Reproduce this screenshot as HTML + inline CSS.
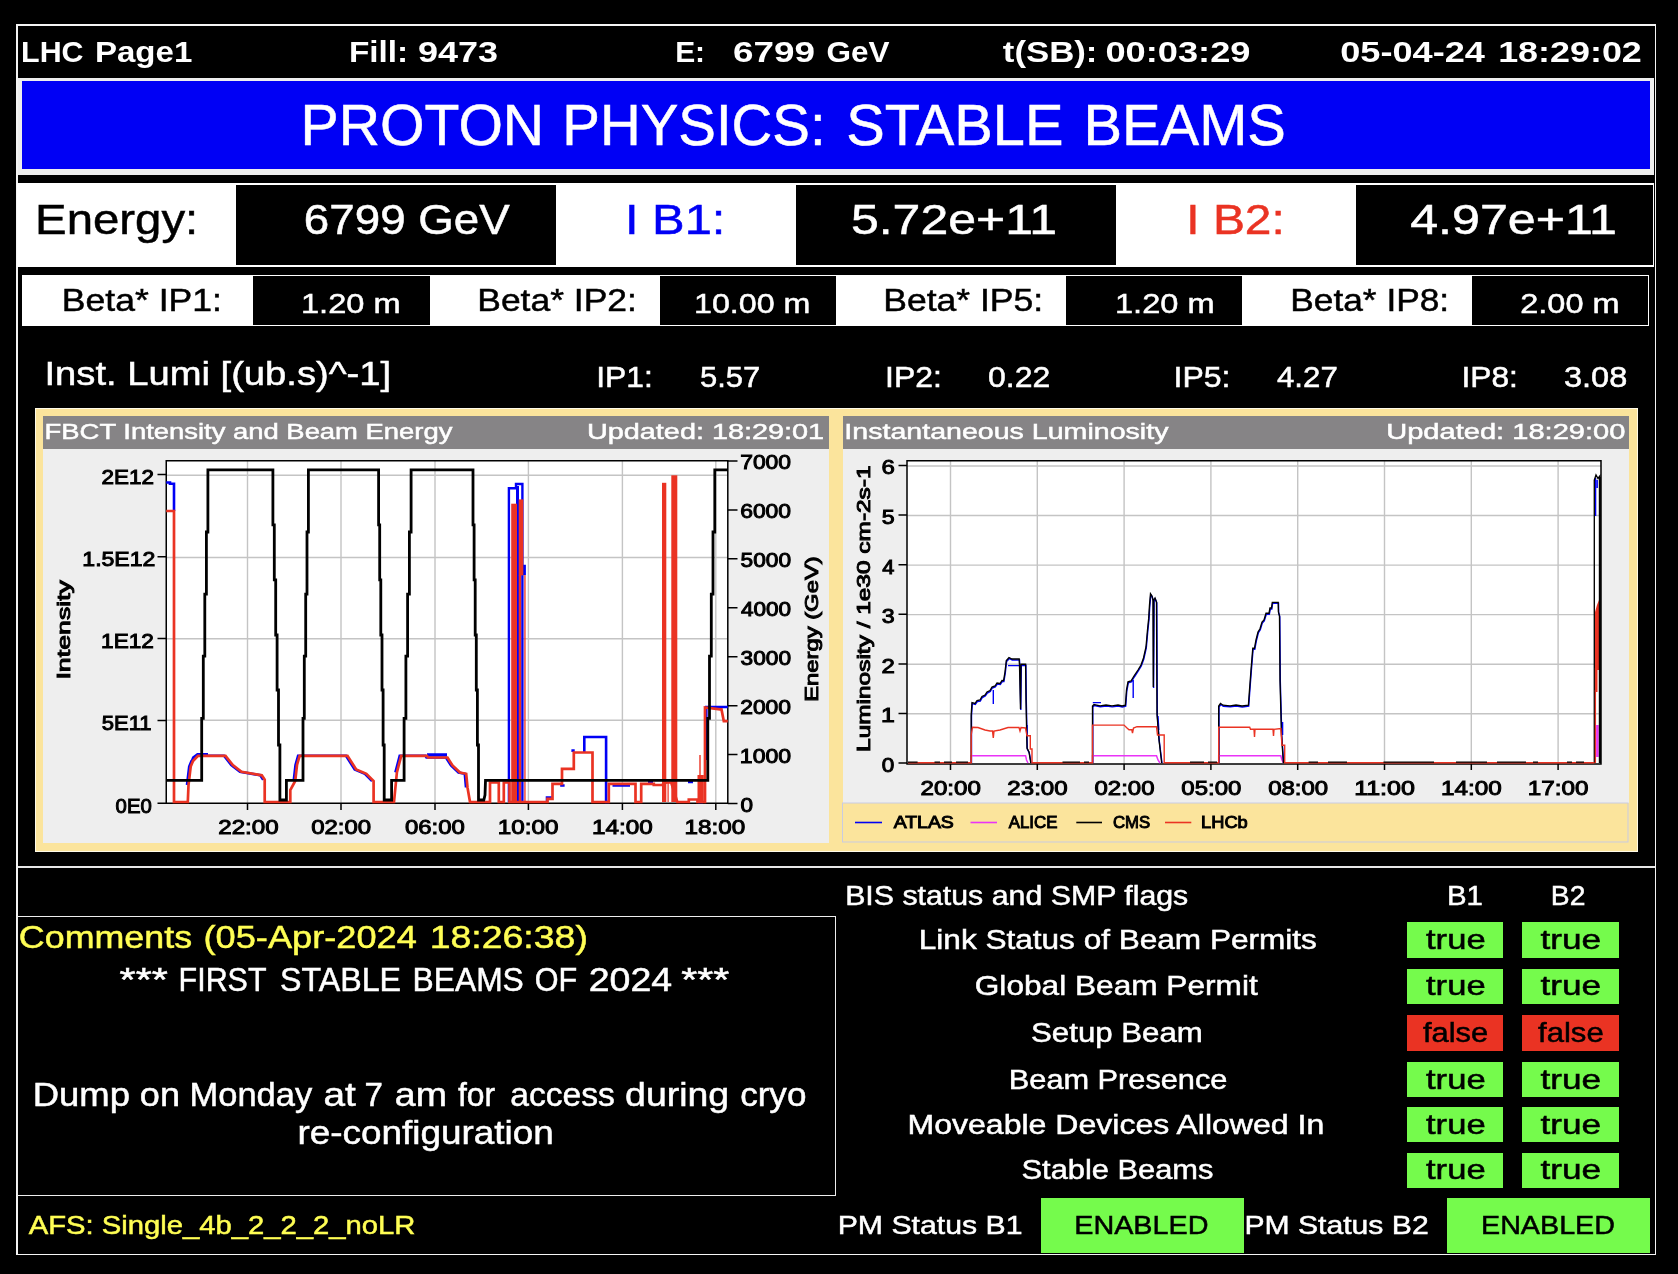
<!DOCTYPE html>
<html lang="en">
<head>
<meta charset="utf-8">
<title>LHC Page1</title>
<style>
html,body{margin:0;padding:0;background:#000;}
body{width:1678px;height:1274px;overflow:hidden;position:relative;font-family:"Liberation Sans",sans-serif;}
#page{position:absolute;left:0;top:0;width:1678px;height:1274px;background:#000;overflow:hidden;filter:blur(0.5px);}
#page div{position:absolute;box-sizing:content-box;}
svg text{white-space:pre;}
</style>
</head>
<body>
<div id="page">
<div class="frame" style="left:16px;top:24.2px;width:1636.5px;height:1228px;border-style:solid;border-color:#f4f4f4;border-width:2.4px 1.4px 1.4px 2.4px"></div>
<div class="banner-border" style="left:18px;top:77.6px;width:1635.50px;height:97.90px;background:#eeeeee;"></div>
<div class="banner" style="left:21.7px;top:80.5px;width:1628.30px;height:88.50px;background:#0000f5;"></div>
<div class="row-energy" style="left:16.5px;top:183.3px;width:1637.50px;height:83.30px;background:#fff;"></div>
<div class="val" style="left:236px;top:185.2px;width:319.50px;height:79.40px;background:#000;"></div>
<div class="val" style="left:796px;top:185.2px;width:319.50px;height:79.40px;background:#000;"></div>
<div class="val" style="left:1355.5px;top:185.2px;width:297.70px;height:79.40px;background:#000;"></div>
<div class="row-beta" style="left:21.7px;top:274.5px;width:1627.60px;height:51.50px;background:#fff;"></div>
<div class="val" style="left:253px;top:275.8px;width:176.50px;height:48.90px;background:#000;"></div>
<div class="val" style="left:660px;top:275.8px;width:176.00px;height:48.90px;background:#000;"></div>
<div class="val" style="left:1066px;top:275.8px;width:176.00px;height:48.90px;background:#000;"></div>
<div class="val" style="left:1472px;top:275.8px;width:176.20px;height:48.90px;background:#000;"></div>
<div class="charts" style="left:35.3px;top:408px;width:1600.60px;height:441.60px;background:#fbe49c;border:1px solid #fffbe8;"></div>
<div class="chart-panel" style="left:42.5px;top:415.5px;width:786.75px;height:427.00px;background:#eeeeee;"></div>
<div class="chart-head" style="left:42.5px;top:415.5px;width:786.75px;height:33.25px;background:#868486;"></div>
<div class="chart-panel" style="left:842.5px;top:415.5px;width:786.75px;height:387.30px;background:#eeeeee;"></div>
<div class="chart-head" style="left:842.5px;top:415.5px;width:786.75px;height:33.25px;background:#868486;"></div>
<div class="sep" style="left:18px;top:866.2px;width:1637.00px;height:1.70px;background:#e6e6e6;"></div>
<div class="comments" style="left:16.5px;top:916px;width:817.6px;height:277.8px;border:1.6px solid #ededed"></div>
<div class="flag" style="left:1407px;top:922px;width:96.25px;height:35.50px;background:#75fb4c;"></div>
<div class="flag" style="left:1522px;top:922px;width:96.50px;height:35.50px;background:#75fb4c;"></div>
<div class="flag" style="left:1407px;top:969px;width:96.25px;height:35.20px;background:#75fb4c;"></div>
<div class="flag" style="left:1522px;top:969px;width:96.50px;height:35.20px;background:#75fb4c;"></div>
<div class="flag" style="left:1407px;top:1015.25px;width:96.25px;height:35.25px;background:#ea3323;"></div>
<div class="flag" style="left:1522px;top:1015.25px;width:96.50px;height:35.25px;background:#ea3323;"></div>
<div class="flag" style="left:1407px;top:1061.75px;width:96.25px;height:35.00px;background:#75fb4c;"></div>
<div class="flag" style="left:1522px;top:1061.75px;width:96.50px;height:35.00px;background:#75fb4c;"></div>
<div class="flag" style="left:1407px;top:1106.5px;width:96.25px;height:35.00px;background:#75fb4c;"></div>
<div class="flag" style="left:1522px;top:1106.5px;width:96.50px;height:35.00px;background:#75fb4c;"></div>
<div class="flag" style="left:1407px;top:1152.75px;width:96.25px;height:35.25px;background:#75fb4c;"></div>
<div class="flag" style="left:1522px;top:1152.75px;width:96.50px;height:35.25px;background:#75fb4c;"></div>
<div class="flag" style="left:1040.75px;top:1197.75px;width:203.50px;height:54.85px;background:#75fb4c;"></div>
<div class="flag" style="left:1447px;top:1197.75px;width:203.25px;height:54.85px;background:#75fb4c;"></div>
<svg width="1678" height="1274" viewBox="0 0 1678 1274" font-family="'Liberation Sans', sans-serif" style="position:absolute;left:0;top:0">
<g id="chart-fbct"><rect x="166.25" y="460.75" width="561.55" height="342.50" fill="#fff"/>
<path d="M166.25 475.3 H727.8 M166.25 557.5 H727.8 M166.25 638.8 H727.8 M166.25 720.3 H727.8 M247.5 460.75 V803.25 M341 460.75 V803.25 M435 460.75 V803.25 M528.4 460.75 V803.25 M622.4 460.75 V803.25 M715.8 460.75 V803.25 " stroke="#c4c4c4" stroke-width="1.4" fill="none"/>
<path d="M166.25 460.75 H727.8 V803.25 H166.25 Z M157.5 474.5 H166.25 M157.5 556.75 H166.25 M157.5 638.5 H166.25 M157.5 720.5 H166.25 M157.5 803.25 H166.25 M727.8 461.00 H737.5 M727.8 509.93 H737.5 M727.8 558.86 H737.5 M727.8 607.79 H737.5 M727.8 656.72 H737.5 M727.8 705.65 H737.5 M727.8 754.58 H737.5 M727.8 803.51 H737.5 M247.5 803.25 V810 M341 803.25 V810 M435 803.25 V810 M528.4 803.25 V810 M622.4 803.25 V810 M715.8 803.25 V810 " stroke="#000" stroke-width="1.5" fill="none"/>
<path d="M187.0 785.0 L189.2 766.6 L191.5 761.0 L196.5 755.8 L224.0 755.8 L231.3 765.0 L240.0 771.8 L260.3 775.3 L263.2 779.7 M293.7 781.0 L295.5 765.0 L298.1 755.8 L346.0 755.8 L354.7 769.5 L364.9 773.8 L372.1 781.0 M395.4 772.4 L399.7 755.8 L425.5 755.8 L426.5 757.5 L446.0 757.5 L451.0 765.5 L458.5 772.5 L464.8 773.8 L466.0 787.5 M166.2 482.5 L170.0 482.5 L170.0 483.8 L174.0 483.8 L174.0 511.0 M547.0 802.0 L547.0 797.5 L552.0 797.5 M560.2 785.5 L564.6 785.5 M190.0 766.0 L193.2 757.5 L197.5 754.4 L208.0 754.4 M427.0 754.6 L447.0 754.6 M572.7 752.0 L572.7 750.6 L574.7 750.6 M584.3 752.9 L584.3 737.0 L606.1 737.0 L606.1 802.0 L609.0 802.0 M612.5 785.5 L630.0 785.5 M648.0 782.3 L653.0 782.3 M688.0 782.0 L693.0 782.0 M698.0 802.0 L703.0 802.0 M706.3 760.0 L706.3 707.0 L727.8 707.0" stroke="#0000f5" stroke-width="2.6" fill="none" stroke-linejoin="miter"/>
<path d="M508.9 802.0 V488.3 H516 V484 H522.4 V802.0 M524.7 564.7 V575" stroke="#0000f5" stroke-width="2.4" fill="none"/>
<rect x="516" y="486" width="3" height="316" fill="#0000f5"/>
<path d="M166.2 511.0 L174.0 511.0 L174.0 802.0 L187.8 802.0 L188.5 785.0 L190.7 766.6 L193.0 761.0 L198.0 755.8 L225.5 755.8 L232.8 765.0 L241.5 771.8 L261.8 775.3 L264.7 779.7 L264.7 802.0 L290.3 802.0 L290.3 790.0 L295.2 781.0 L297.0 765.0 L299.6 755.8 L347.5 755.8 L356.2 769.5 L366.4 773.8 L373.6 781.0 L373.6 802.0 L394.0 802.0 L396.9 772.4 L401.2 755.8 L427.0 755.8 L428.0 757.5 L447.5 757.5 L452.5 765.5 L460.0 772.5 L466.2 773.8 L467.5 787.5 L470.0 802.0 L490.0 802.0 L490.0 782.5 L498.8 782.5 L498.8 802.0 L503.8 802.0 L503.8 782.5 L509.5 782.5 L509.5 802.0 L511.2 802.0 L525.0 802.0 L547.5 802.0 L547.5 798.8 L552.5 798.8 L552.5 783.8 L562.0 783.8 L562.0 768.8 L573.8 768.8 L573.8 752.5 L592.5 752.5 L592.5 802.0 L608.8 802.0 L608.8 783.8 L635.5 783.8 L635.5 802.0 L641.2 802.0 L641.2 783.8 L653.8 783.8 L653.8 785.0 L662.0 785.0 L666.2 782.5 L671.2 782.5 L677.3 802.0 L688.8 802.0 L688.8 799.5 L697.5 799.5 L697.5 802.0 L705.0 802.0 L705.0 707.5 L720.0 709.4 L721.5 709.4 L723.8 721.2 L727.8 721.2" stroke="#ea3323" stroke-width="2.7" fill="none" stroke-linejoin="miter"/>
<g fill="#ea3323"><rect x="511.2" y="503.7" width="5.8" height="298.3"/><rect x="518.7" y="499.4" width="4.6" height="76"/><rect x="518.7" y="575" width="2.4" height="227"/><rect x="524.3" y="575" width="1.3" height="227"/><rect x="513.2" y="782" width="3" height="20"/><rect x="662" y="482.8" width="4.3" height="319.2"/><rect x="671.3" y="475.3" width="6" height="326.7"/><rect x="697.5" y="775" width="6.3" height="27"/><rect x="699.3" y="755" width="1.4" height="22"/><rect x="667.5" y="783" width="1.2" height="19"/></g>
<path d="M166.2 780.4 L201.7 780.4 L201.7 718.3 L203.3 718.3 L203.3 656.2 L204.8 656.2 L204.8 594.1 L206.4 594.1 L206.4 532.0 L207.9 532.0 L207.9 469.9 L209.5 469.9 L272.9 469.9 L272.9 524.9 L274.3 524.9 L274.3 579.9 L275.7 579.9 L275.7 635.0 L277.1 635.0 L277.1 690.0 L278.5 690.0 L278.5 745.0 L279.9 745.0 L279.9 800.0 L281.3 800.0 L286.4 800.0 L286.4 780.4 L303.0 780.4 L303.0 718.3 L304.3 718.3 L304.3 656.2 L305.7 656.2 L305.7 594.1 L307.0 594.1 L307.0 532.0 L308.4 532.0 L308.4 469.9 L309.7 469.9 L378.6 469.9 L378.6 524.9 L379.7 524.9 L379.7 579.9 L380.8 579.9 L380.8 635.0 L382.0 635.0 L382.0 690.0 L383.1 690.0 L383.1 745.0 L384.2 745.0 L384.2 800.0 L385.3 800.0 L391.6 800.0 L391.6 780.4 L404.1 780.4 L404.1 718.3 L405.9 718.3 L405.9 656.2 L407.6 656.2 L407.6 594.1 L409.4 594.1 L409.4 532.0 L411.1 532.0 L411.1 469.9 L412.9 469.9 L473.0 469.9 L473.0 524.9 L474.1 524.9 L474.1 579.9 L475.2 579.9 L475.2 635.0 L476.3 635.0 L476.3 690.0 L477.4 690.0 L477.4 745.0 L478.5 745.0 L478.5 800.0 L479.6 800.0 L483.8 800.0 L485.0 795.0 L485.5 780.4 L707.8 780.4 L707.8 718.3 L709.5 718.3 L709.5 656.2 L711.3 656.2 L711.3 594.1 L713.0 594.1 L713.0 532.0 L714.8 532.0 L714.8 469.9 L716.5 469.9 L727.8 469.9" stroke="#000" stroke-width="2.8" fill="none" stroke-linejoin="miter"/>
<text transform="translate(101.45 483.85) scale(1.1363 1)" font-size="19.77" stroke="#000" stroke-width="0.95" fill="#000">2E12</text>
<text transform="translate(82.31 566.10) scale(1.1671 1)" font-size="19.77" stroke="#000" stroke-width="0.95" fill="#000">1.5E12</text>
<text transform="translate(101.09 647.85) scale(1.1443 1)" font-size="19.77" stroke="#000" stroke-width="0.95" fill="#000">1E12</text>
<text transform="translate(101.81 729.85) scale(1.1148 1)" font-size="19.77" stroke="#000" stroke-width="0.95" fill="#000">5E11</text>
<text transform="translate(115.62 812.60) scale(1.0275 1)" font-size="19.77" stroke="#000" stroke-width="0.95" fill="#000">0E0</text>
<text transform="translate(740.18 469.45) scale(1.1572 1)" font-size="19.77" stroke="#000" stroke-width="0.95" fill="#000">7000</text>
<text transform="translate(740.18 518.38) scale(1.1572 1)" font-size="19.77" stroke="#000" stroke-width="0.95" fill="#000">6000</text>
<text transform="translate(740.54 567.31) scale(1.1489 1)" font-size="19.77" stroke="#000" stroke-width="0.95" fill="#000">5000</text>
<text transform="translate(740.90 616.24) scale(1.1407 1)" font-size="19.77" stroke="#000" stroke-width="0.95" fill="#000">4000</text>
<text transform="translate(740.54 665.17) scale(1.1489 1)" font-size="19.77" stroke="#000" stroke-width="0.95" fill="#000">3000</text>
<text transform="translate(740.18 714.10) scale(1.1572 1)" font-size="19.77" stroke="#000" stroke-width="0.95" fill="#000">2000</text>
<text transform="translate(739.81 763.03) scale(1.1657 1)" font-size="19.77" stroke="#000" stroke-width="0.95" fill="#000">1000</text>
<text transform="translate(740.55 811.96) scale(1.1382 1)" font-size="19.77" stroke="#000" stroke-width="0.95" fill="#000">0</text>
<text transform="translate(218.32 834.45) scale(1.2195 1)" font-size="19.77" stroke="#000" stroke-width="0.95" fill="#000">22:00</text>
<text transform="translate(311.20 834.45) scale(1.2117 1)" font-size="19.77" stroke="#000" stroke-width="0.95" fill="#000">02:00</text>
<text transform="translate(404.95 834.45) scale(1.2117 1)" font-size="19.77" stroke="#000" stroke-width="0.95" fill="#000">06:00</text>
<text transform="translate(497.68 834.45) scale(1.2274 1)" font-size="19.77" stroke="#000" stroke-width="0.95" fill="#000">10:00</text>
<text transform="translate(592.08 834.45) scale(1.2274 1)" font-size="19.77" stroke="#000" stroke-width="0.95" fill="#000">14:00</text>
<text transform="translate(684.58 834.45) scale(1.2274 1)" font-size="19.77" stroke="#000" stroke-width="0.95" fill="#000">18:00</text>
<text transform="translate(69.50 679.59) rotate(-90) scale(1.4464 1)" font-size="18.49" stroke="#000" stroke-width="0.95" fill="#000">Intensity</text>
<text transform="translate(817.50 701.86) rotate(-90) scale(1.2881 1)" font-size="18.49" stroke="#000" stroke-width="0.95" fill="#000">Energy (GeV)</text></g>
<g id="chart-lumi"><rect x="907.0" y="460.75" width="694.00" height="303.15" fill="#fff"/>
<path d="M907.0 466.00 H1601.0 M907.0 515.55 H1601.0 M907.0 565.10 H1601.0 M907.0 614.65 H1601.0 M907.0 664.20 H1601.0 M907.0 713.75 H1601.0 M950.50 460.75 V763.9 M1037.30 460.75 V763.9 M1124.10 460.75 V763.9 M1210.90 460.75 V763.9 M1297.70 460.75 V763.9 M1384.50 460.75 V763.9 M1471.30 460.75 V763.9 M1558.10 460.75 V763.9 " stroke="#c4c4c4" stroke-width="1.4" fill="none"/>
<path d="M907.0 460.75 H1601.0 V763.9 H907.0 Z M898.5 465.50 H907.0 M898.5 515.10 H907.0 M898.5 564.70 H907.0 M898.5 614.30 H907.0 M898.5 663.90 H907.0 M898.5 713.50 H907.0 M898.5 763.10 H907.0 M950.50 763.9 V770 M1037.30 763.9 V770 M1124.10 763.9 V770 M1210.90 763.9 V770 M1297.70 763.9 V770 M1384.50 763.9 V770 M1471.30 763.9 V770 M1558.10 763.9 V770 " stroke="#000" stroke-width="1.5" fill="none"/>
<path d="M971.5 763.0 L971.5 716.0 L972.3 703.6 L975.3 704.5 L977.3 701.5 L980.3 701.0 L982.3 697.5 L985.3 696.0 L987.3 693.0 L990.3 691.5 L992.3 688.0 L995.3 687.0 L997.3 684.0 L1000.3 684.5 L1002.3 681.5 L1003.9 681.6 L1005.3 673.0 L1006.6 661.5 L1007.8 660.3 L1009.3 658.5 L1012.3 660.0 L1019.5 660.0 L1019.8 666.0 L1020.8 710.0 L1021.3 665.2 L1025.9 665.2 L1026.3 701.0 L1027.3 749.0 L1029.3 753.0 L1031.1 763.0 M1092.8 763.0 L1092.8 707.0 L1094.3 705.5 L1100.3 706.8 L1106.3 706.0 L1112.3 706.9 L1118.3 706.0 L1122.3 707.0 L1125.7 706.2 L1126.8 691.0 L1128.3 682.9 L1131.3 682.0 L1134.3 677.0 L1138.3 671.0 L1141.3 666.0 L1143.8 659.0 L1146.3 648.0 L1147.8 631.0 L1149.0 619.4 L1149.8 606.0 L1150.8 594.8 L1152.3 597.0 L1153.3 601.0 L1153.6 688.0 L1154.1 601.0 L1155.3 599.0 L1156.8 603.0 L1157.3 715.0 L1159.3 741.0 L1162.0 763.0 M1219.0 763.0 L1219.0 707.0 L1220.8 704.5 L1223.3 706.2 L1230.3 706.8 L1236.3 706.0 L1242.3 707.0 L1248.7 706.2 L1249.8 691.0 L1251.3 671.2 L1253.1 649.2 L1254.8 649.2 L1256.3 641.0 L1258.3 633.0 L1260.3 629.8 L1262.3 623.0 L1264.3 621.0 L1266.3 614.2 L1269.3 614.2 L1270.3 609.0 L1271.8 609.0 L1272.6 603.3 L1278.5 603.3 L1278.7 613.0 L1279.8 616.8 L1280.3 681.0 L1281.1 710.0 L1281.8 736.0 L1283.7 763.0 M993.3 690.0 L993.3 704.0 M1008.0 665.6 L1025.0 665.6 M1133.2 680.0 L1133.2 698.0 M1092.8 702.6 L1101.0 702.6 M1595.6 478.0 L1595.6 516.0 M1597.2 480.0 L1597.2 488.0 M1027.2 725.0 L1027.2 735.0 M1158.0 716.0 L1158.8 730.0 M1282.6 722.0 L1282.6 735.0" stroke="#0000f5" stroke-width="1.4" fill="none"/>
<path d="M971.2 763.0 L971.2 755.7 L1025.6 755.7 L1026.5 760.0 L1028.0 763.0 M1092.5 763.0 L1092.5 755.7 L1156.5 755.7 L1158.0 760.0 L1160.0 763.0 M1218.7 763.0 L1218.7 755.7 L1280.8 755.7 L1282.0 760.0 L1283.4 763.0" stroke="#ea33f7" stroke-width="1.5" fill="none"/>
<path d="M971.2 763.0 L971.2 715.0 L972.0 702.6 L975.0 703.5 L977.0 700.5 L980.0 700.0 L982.0 696.5 L985.0 695.0 L987.0 692.0 L990.0 690.5 L992.0 687.0 L995.0 686.0 L997.0 683.0 L1000.0 683.5 L1002.0 680.5 L1003.6 680.6 L1005.0 672.0 L1006.3 660.5 L1007.5 659.3 L1009.0 657.5 L1012.0 659.0 L1019.2 659.0 L1019.5 665.0 L1020.5 709.0 L1021.0 664.2 L1025.6 664.2 L1026.0 700.0 L1027.0 748.0 L1029.0 752.0 L1030.8 763.0 M1092.5 763.0 L1092.5 706.0 L1094.0 704.5 L1100.0 705.8 L1106.0 705.0 L1112.0 705.9 L1118.0 705.0 L1122.0 706.0 L1125.4 705.2 L1126.5 690.0 L1128.0 681.9 L1131.0 681.0 L1134.0 676.0 L1138.0 670.0 L1141.0 665.0 L1143.5 658.0 L1146.0 647.0 L1147.5 630.0 L1148.7 618.4 L1149.5 605.0 L1150.5 593.8 L1152.0 596.0 L1153.0 600.0 L1153.3 687.0 L1153.8 600.0 L1155.0 598.0 L1156.5 602.0 L1157.0 714.0 L1159.0 740.0 L1161.7 763.0 M1218.7 763.0 L1218.7 706.0 L1220.5 703.5 L1223.0 705.2 L1230.0 705.8 L1236.0 705.0 L1242.0 706.0 L1248.4 705.2 L1249.5 690.0 L1251.0 670.2 L1252.8 648.2 L1254.5 648.2 L1256.0 640.0 L1258.0 632.0 L1260.0 628.8 L1262.0 622.0 L1264.0 620.0 L1266.0 613.2 L1269.0 613.2 L1270.0 608.0 L1271.5 608.0 L1272.3 602.3 L1278.2 602.3 L1278.4 612.0 L1279.5 615.8 L1280.0 680.0 L1280.8 709.0 L1281.5 735.0 L1283.4 763.0 M1594.3 763.0 L1594.3 480.0 L1596.0 475.0 L1598.0 478.5 L1599.8 476.0 L1600.2 763.0" stroke="#000" stroke-width="1.35" fill="none"/>
<path d="M908.0 762.8 L971.2 762.8 L971.2 735.0 L972.5 727.2 L978.0 727.5 L985.0 730.0 L990.0 731.0 L992.5 731.0 L993.3 738.0 L994.0 731.0 L1000.0 730.0 L1008.0 727.5 L1019.0 727.5 L1020.0 731.0 L1021.0 727.5 L1025.5 728.0 L1027.0 735.8 L1030.3 735.8 L1030.3 749.0 L1032.0 749.0 L1032.0 762.8 L1092.5 762.8 L1092.5 725.1 L1124.0 725.1 L1127.0 728.0 L1129.0 729.8 L1131.8 729.8 L1132.5 733.0 L1133.5 728.0 L1137.0 726.7 L1156.5 726.7 L1157.5 735.0 L1164.2 735.0 L1164.2 762.8 L1218.7 762.8 L1218.7 727.2 L1249.7 727.2 L1250.5 729.3 L1254.0 729.3 L1254.5 737.0 L1255.0 729.3 L1273.0 729.3 L1273.5 736.0 L1274.0 729.3 L1280.8 728.5 L1282.0 745.3 L1284.7 745.3 L1284.7 762.8 L1594.5 762.8" stroke="#ea3323" stroke-width="1.4" fill="none"/>
<path d="M1595.4 763.0 V690" stroke="#ea3323" stroke-width="1.3" fill="none"/>
<path d="M1596.2 692 V668" stroke="#ea3323" stroke-width="2.6" fill="none"/>
<path d="M1595 670 V612 L1597 605 L1599 600 V670 Z" fill="#ea3323" stroke="none"/>
<path d="M1597.4 725 V757" stroke="#ea33f7" stroke-width="2.6" fill="none"/>
<path d="M1599.8 477 V763.0" stroke="#000" stroke-width="2" fill="none"/>
<path d="M908 762.2 H917.6 M934.5 762.2 H940 M944 762.2 H952 M956 762.2 H968 M1062.5 762.2 H1080 M1084 762.2 H1089 M1190 762.2 H1204 M1208 762.2 H1217 M1308.6 762.2 H1318 M1328 762.2 H1347 M1383.5 762.2 H1434 M1456 762.2 H1487 M1497 762.2 H1526 M1533 762.2 H1538 M1567 762.2 H1572 M1576 762.2 H1584 " stroke="#000" stroke-width="1.3" fill="none"/>
<rect x="842.5" y="803" width="785.5" height="39" fill="#fbe49c" stroke="#c9cbe0" stroke-width="1"/><path d="M855 822.5 H882" stroke="#0000f5" stroke-width="1.6"/><path d="M970.5 822.5 H997" stroke="#ea33f7" stroke-width="1.6"/><path d="M1076.3 822.5 H1102" stroke="#000" stroke-width="1.6"/><path d="M1165 822.5 H1191.3" stroke="#ea3323" stroke-width="1.6"/>
<text transform="translate(881.38 474.45) scale(1.2140 1)" font-size="19.77" stroke="#000" stroke-width="0.95" fill="#000">6</text>
<text transform="translate(881.77 524.05) scale(1.1749 1)" font-size="19.77" stroke="#000" stroke-width="0.95" fill="#000">5</text>
<text transform="translate(882.16 573.65) scale(1.1037 1)" font-size="19.77" stroke="#000" stroke-width="0.95" fill="#000">4</text>
<text transform="translate(881.77 623.25) scale(1.1749 1)" font-size="19.77" stroke="#000" stroke-width="0.95" fill="#000">3</text>
<text transform="translate(881.38 672.85) scale(1.2140 1)" font-size="19.77" stroke="#000" stroke-width="0.95" fill="#000">2</text>
<text transform="translate(880.95 722.45) scale(1.2559 1)" font-size="19.77" stroke="#000" stroke-width="0.95" fill="#000">1</text>
<text transform="translate(881.80 772.05) scale(1.1382 1)" font-size="19.77" stroke="#000" stroke-width="0.95" fill="#000">0</text>
<text transform="translate(920.57 794.75) scale(1.2195 1)" font-size="19.77" stroke="#000" stroke-width="0.95" fill="#000">20:00</text>
<text transform="translate(1007.37 794.75) scale(1.2195 1)" font-size="19.77" stroke="#000" stroke-width="0.95" fill="#000">23:00</text>
<text transform="translate(1094.55 794.75) scale(1.2117 1)" font-size="19.77" stroke="#000" stroke-width="0.95" fill="#000">02:00</text>
<text transform="translate(1181.35 794.75) scale(1.2117 1)" font-size="19.77" stroke="#000" stroke-width="0.95" fill="#000">05:00</text>
<text transform="translate(1268.15 794.75) scale(1.2117 1)" font-size="19.77" stroke="#000" stroke-width="0.95" fill="#000">08:00</text>
<text transform="translate(1354.14 794.75) scale(1.2663 1)" font-size="19.77" stroke="#000" stroke-width="0.95" fill="#000">11:00</text>
<text transform="translate(1440.98 794.75) scale(1.2274 1)" font-size="19.77" stroke="#000" stroke-width="0.95" fill="#000">14:00</text>
<text transform="translate(1527.78 794.75) scale(1.2274 1)" font-size="19.77" stroke="#000" stroke-width="0.95" fill="#000">17:00</text>
<text transform="translate(893.75 828.30) scale(1.1668 1)" font-size="16.64" stroke="#000" stroke-width="0.95" fill="#000">ATLAS</text>
<text transform="translate(1008.75 828.30) scale(1.0128 1)" font-size="16.64" stroke="#000" stroke-width="0.95" fill="#000">ALICE</text>
<text transform="translate(1112.96 828.30) scale(1.0071 1)" font-size="16.64" stroke="#000" stroke-width="0.95" fill="#000">CMS</text>
<text transform="translate(1201.07 828.30) scale(1.0969 1)" font-size="16.64" stroke="#000" stroke-width="0.95" fill="#000">LHCb</text>
<text transform="translate(869.50 751.91) rotate(-90) scale(1.3221 1)" font-size="18.49" stroke="#000" stroke-width="0.95" fill="#000">Luminosity / 1e30 cm-2s-1</text></g>
<g id="txt-header"><text transform="translate(21.10 61.50) scale(1.0582 1)" font-size="28.73" font-weight="bold" fill="#fff">LHC</text>
<text transform="translate(94.93 61.50) scale(1.1506 1)" font-size="28.73" font-weight="bold" fill="#fff">Page1</text>
<text transform="translate(348.92 61.50) scale(1.1604 1)" font-size="28.73" font-weight="bold" fill="#fff">Fill:</text>
<text transform="translate(417.88 61.50) scale(1.2521 1)" font-size="28.73" font-weight="bold" fill="#fff">9473</text>
<text transform="translate(675.13 61.50) scale(1.0428 1)" font-size="28.73" font-weight="bold" fill="#fff">E:</text>
<text transform="translate(733.05 61.50) scale(1.2810 1)" font-size="28.73" font-weight="bold" fill="#fff">6799</text>
<text transform="translate(826.62 61.50) scale(1.0965 1)" font-size="28.73" font-weight="bold" fill="#fff">GeV</text>
<text transform="translate(1002.80 61.50) scale(1.2112 1)" font-size="28.73" font-weight="bold" fill="#fff">t(SB):</text>
<text transform="translate(1105.47 61.50) scale(1.2612 1)" font-size="28.73" font-weight="bold" fill="#fff">00:03:29</text>
<text transform="translate(1340.27 61.50) scale(1.2583 1)" font-size="28.73" font-weight="bold" fill="#fff">05-04-24</text>
<text transform="translate(1498.16 61.50) scale(1.2499 1)" font-size="28.73" font-weight="bold" fill="#fff">18:29:02</text></g>
<g id="txt-title"><text transform="translate(300.53 144.50) scale(0.9869 1)" font-size="57.96" stroke="#fff" stroke-width="0.5" fill="#fff">PROTON</text>
<text transform="translate(562.29 144.50) scale(0.9733 1)" font-size="57.96" stroke="#fff" stroke-width="0.5" fill="#fff">PHYSICS:</text>
<text transform="translate(846.19 144.50) scale(0.9967 1)" font-size="57.96" stroke="#fff" stroke-width="0.5" fill="#fff">STABLE</text>
<text transform="translate(1083.48 144.50) scale(0.9978 1)" font-size="57.96" stroke="#fff" stroke-width="0.5" fill="#fff">BEAMS</text></g>
<g id="txt-energy"><text transform="translate(35.10 234.30) scale(1.1209 1)" font-size="42.24" stroke="#000" stroke-width="0.5" fill="#000">Energy:</text>
<text transform="translate(303.86 234.30) scale(1.0973 1)" font-size="41.67" stroke="#fff" stroke-width="0.5" fill="#fff">6799 GeV</text>
<text transform="translate(624.93 234.30) scale(1.1724 1)" font-size="41.67" stroke="#0000f5" stroke-width="0.5" fill="#0000f5">I B1:</text>
<text transform="translate(850.94 234.30) scale(1.1991 1)" font-size="41.67" stroke="#fff" stroke-width="0.5" fill="#fff">5.72e+11</text>
<text transform="translate(1186.26 234.30) scale(1.1502 1)" font-size="41.67" stroke="#ea3323" stroke-width="0.5" fill="#ea3323">I B2:</text>
<text transform="translate(1410.22 234.30) scale(1.2033 1)" font-size="41.67" stroke="#fff" stroke-width="0.5" fill="#fff">4.97e+11</text></g>
<g id="txt-beta"><text transform="translate(61.82 310.80) scale(1.1064 1)" font-size="32.14" stroke="#000" stroke-width="0.5" fill="#000">Beta* IP1:</text>
<text transform="translate(477.23 310.80) scale(1.1036 1)" font-size="32.14" stroke="#000" stroke-width="0.5" fill="#000">Beta* IP2:</text>
<text transform="translate(883.22 310.80) scale(1.1054 1)" font-size="32.14" stroke="#000" stroke-width="0.5" fill="#000">Beta* IP5:</text>
<text transform="translate(1290.24 310.80) scale(1.0982 1)" font-size="32.14" stroke="#000" stroke-width="0.5" fill="#000">Beta* IP8:</text>
<text transform="translate(300.96 312.50) scale(1.1468 1)" font-size="28.44" stroke="#fff" stroke-width="0.5" fill="#fff">1.20 m</text>
<text transform="translate(693.99 312.50) scale(1.1328 1)" font-size="28.44" stroke="#fff" stroke-width="0.5" fill="#fff">10.00 m</text>
<text transform="translate(1114.96 312.50) scale(1.1468 1)" font-size="28.44" stroke="#fff" stroke-width="0.5" fill="#fff">1.20 m</text>
<text transform="translate(1520.22 312.50) scale(1.1438 1)" font-size="28.44" stroke="#fff" stroke-width="0.5" fill="#fff">2.00 m</text></g>
<g id="txt-lumi"><text transform="translate(44.52 385.00) scale(1.1302 1)" font-size="33.78" stroke="#fff" stroke-width="0.5" fill="#fff">Inst. Lumi [(ub.s)^-1]</text>
<text transform="translate(596.26 386.50) scale(1.0916 1)" font-size="29.16" stroke="#fff" stroke-width="0.5" fill="#fff">IP1:</text>
<text transform="translate(700.03 386.50) scale(1.0613 1)" font-size="29.16" stroke="#fff" stroke-width="0.5" fill="#fff">5.57</text>
<text transform="translate(885.00 386.50) scale(1.0969 1)" font-size="29.16" stroke="#fff" stroke-width="0.5" fill="#fff">IP2:</text>
<text transform="translate(988.00 386.50) scale(1.0978 1)" font-size="29.16" stroke="#fff" stroke-width="0.5" fill="#fff">0.22</text>
<text transform="translate(1173.50 386.50) scale(1.0969 1)" font-size="29.16" stroke="#fff" stroke-width="0.5" fill="#fff">IP5:</text>
<text transform="translate(1277.01 386.50) scale(1.0706 1)" font-size="29.16" stroke="#fff" stroke-width="0.5" fill="#fff">4.27</text>
<text transform="translate(1461.53 386.50) scale(1.0862 1)" font-size="29.16" stroke="#fff" stroke-width="0.5" fill="#fff">IP8:</text>
<text transform="translate(1563.98 386.50) scale(1.1161 1)" font-size="29.16" stroke="#fff" stroke-width="0.5" fill="#fff">3.08</text></g>
<g id="txt-charthdr"><text transform="translate(44.56 439.20) scale(1.2359 1)" font-size="22.19" stroke="#fff" stroke-width="0.5" fill="#fff">FBCT Intensity and Beam Energy</text>
<text transform="translate(586.95 439.20) scale(1.2993 1)" font-size="22.19" stroke="#fff" stroke-width="0.5" fill="#fff">Updated: 18:29:01</text>
<text transform="translate(844.37 439.20) scale(1.2883 1)" font-size="22.19" stroke="#fff" stroke-width="0.5" fill="#fff">Instantaneous Luminosity</text>
<text transform="translate(1386.18 439.20) scale(1.3107 1)" font-size="22.19" stroke="#fff" stroke-width="0.5" fill="#fff">Updated: 18:29:00</text></g>
<g id="txt-comments"><text transform="translate(18.82 947.50) scale(1.1202 1)" font-size="32.00" stroke="#fffe54" stroke-width="0.5" fill="#fffe54">Comments</text>
<text transform="translate(203.55 947.50) scale(1.1315 1)" font-size="32.00" stroke="#fffe54" stroke-width="0.5" fill="#fffe54">(05-Apr-2024</text>
<text transform="translate(429.66 947.50) scale(1.1705 1)" font-size="32.00" stroke="#fffe54" stroke-width="0.5" fill="#fffe54">18:26:38)</text>
<text transform="translate(119.60 990.50) scale(1.2629 1)" font-size="32.71" stroke="#fff" stroke-width="0.5" fill="#fff">***</text>
<text transform="translate(178.62 990.50) scale(0.9302 1)" font-size="32.71" stroke="#fff" stroke-width="0.5" fill="#fff">FIRST</text>
<text transform="translate(279.99 990.50) scale(0.9845 1)" font-size="32.71" stroke="#fff" stroke-width="0.5" fill="#fff">STABLE</text>
<text transform="translate(412.52 990.50) scale(0.9720 1)" font-size="32.71" stroke="#fff" stroke-width="0.5" fill="#fff">BEAMS</text>
<text transform="translate(534.82 990.50) scale(0.9341 1)" font-size="32.71" stroke="#fff" stroke-width="0.5" fill="#fff">OF</text>
<text transform="translate(588.74 990.50) scale(1.1467 1)" font-size="32.71" stroke="#fff" stroke-width="0.5" fill="#fff">2024</text>
<text transform="translate(681.36 990.50) scale(1.2562 1)" font-size="32.71" stroke="#fff" stroke-width="0.5" fill="#fff">***</text>
<text transform="translate(32.65 1106.00) scale(1.1154 1)" font-size="32.71" stroke="#fff" stroke-width="0.5" fill="#fff">Dump</text>
<text transform="translate(139.87 1106.00) scale(1.1036 1)" font-size="32.71" stroke="#fff" stroke-width="0.5" fill="#fff">on</text>
<text transform="translate(189.56 1106.00) scale(1.0543 1)" font-size="32.71" stroke="#fff" stroke-width="0.5" fill="#fff">Monday</text>
<text transform="translate(323.54 1106.00) scale(1.1851 1)" font-size="32.71" stroke="#fff" stroke-width="0.5" fill="#fff">at</text>
<text transform="translate(364.45 1106.00) scale(1.0109 1)" font-size="32.71" stroke="#fff" stroke-width="0.5" fill="#fff">7</text>
<text transform="translate(394.83 1106.00) scale(1.1469 1)" font-size="32.71" stroke="#fff" stroke-width="0.5" fill="#fff">am</text>
<text transform="translate(458.00 1106.00) scale(0.9733 1)" font-size="32.71" stroke="#fff" stroke-width="0.5" fill="#fff">for</text>
<text transform="translate(510.20 1106.00) scale(1.0274 1)" font-size="32.71" stroke="#fff" stroke-width="0.5" fill="#fff">access</text>
<text transform="translate(625.08 1106.00) scale(1.1440 1)" font-size="32.71" stroke="#fff" stroke-width="0.5" fill="#fff">during</text>
<text transform="translate(740.15 1106.00) scale(1.0724 1)" font-size="32.71" stroke="#fff" stroke-width="0.5" fill="#fff">cryo</text>
<text transform="translate(297.44 1144.00) scale(1.1280 1)" font-size="32.71" stroke="#fff" stroke-width="0.5" fill="#fff">re-configuration</text>
<text transform="translate(28.75 1233.50) scale(1.0954 1)" font-size="26.67" stroke="#fffe54" stroke-width="0.5" fill="#fffe54">AFS: Single_4b_2_2_2_noLR</text></g>
<g id="txt-bis"><text transform="translate(845.13 904.50) scale(1.0933 1)" font-size="27.73" stroke="#fff" stroke-width="0.5" fill="#fff">BIS status and SMP flags</text>
<text transform="translate(1446.95 904.50) scale(1.0610 1)" font-size="27.73" stroke="#fff" stroke-width="0.5" fill="#fff">B1</text>
<text transform="translate(1550.79 904.50) scale(1.0202 1)" font-size="27.73" stroke="#fff" stroke-width="0.5" fill="#fff">B2</text>
<text transform="translate(918.78 948.75) scale(1.1529 1)" font-size="27.38" stroke="#fff" stroke-width="0.5" fill="#fff">Link Status of Beam Permits</text>
<text transform="translate(1426.00 948.75) scale(1.2645 1)" font-size="27.38" stroke="#000" stroke-width="0.5" fill="#000">true</text>
<text transform="translate(1540.50 948.75) scale(1.2862 1)" font-size="27.38" stroke="#000" stroke-width="0.5" fill="#000">true</text>
<text transform="translate(974.77 995.00) scale(1.1409 1)" font-size="27.73" stroke="#fff" stroke-width="0.5" fill="#fff">Global Beam Permit</text>
<text transform="translate(1426.00 995.00) scale(1.2483 1)" font-size="27.73" stroke="#000" stroke-width="0.5" fill="#000">true</text>
<text transform="translate(1540.50 995.00) scale(1.2697 1)" font-size="27.73" stroke="#000" stroke-width="0.5" fill="#000">true</text>
<text transform="translate(1031.02 1042.25) scale(1.1405 1)" font-size="27.38" stroke="#fff" stroke-width="0.5" fill="#fff">Setup Beam</text>
<text transform="translate(1423.00 1042.25) scale(1.1283 1)" font-size="27.38" stroke="#000" stroke-width="0.5" fill="#000">false</text>
<text transform="translate(1538.00 1042.25) scale(1.1372 1)" font-size="27.38" stroke="#000" stroke-width="0.5" fill="#000">false</text>
<text transform="translate(1008.85 1088.50) scale(1.1373 1)" font-size="27.02" stroke="#fff" stroke-width="0.5" fill="#fff">Beam Presence</text>
<text transform="translate(1426.00 1088.50) scale(1.2811 1)" font-size="27.02" stroke="#000" stroke-width="0.5" fill="#000">true</text>
<text transform="translate(1540.50 1088.50) scale(1.3031 1)" font-size="27.02" stroke="#000" stroke-width="0.5" fill="#000">true</text>
<text transform="translate(907.50 1133.50) scale(1.1704 1)" font-size="27.38" stroke="#fff" stroke-width="0.5" fill="#fff">Moveable Devices Allowed In</text>
<text transform="translate(1426.00 1133.50) scale(1.2645 1)" font-size="27.38" stroke="#000" stroke-width="0.5" fill="#000">true</text>
<text transform="translate(1540.50 1133.50) scale(1.2862 1)" font-size="27.38" stroke="#000" stroke-width="0.5" fill="#000">true</text>
<text transform="translate(1021.54 1179.25) scale(1.1260 1)" font-size="27.38" stroke="#fff" stroke-width="0.5" fill="#fff">Stable Beams</text>
<text transform="translate(1426.00 1179.25) scale(1.2645 1)" font-size="27.38" stroke="#000" stroke-width="0.5" fill="#000">true</text>
<text transform="translate(1540.50 1179.25) scale(1.2862 1)" font-size="27.38" stroke="#000" stroke-width="0.5" fill="#000">true</text>
<text transform="translate(837.64 1233.50) scale(1.1337 1)" font-size="26.67" stroke="#fff" stroke-width="0.5" fill="#fff">PM Status B1</text>
<text transform="translate(1074.25 1233.50) scale(1.0783 1)" font-size="26.67" stroke="#000" stroke-width="0.5" fill="#000">ENABLED</text>
<text transform="translate(1244.39 1233.50) scale(1.1306 1)" font-size="26.67" stroke="#fff" stroke-width="0.5" fill="#fff">PM Status B2</text>
<text transform="translate(1481.01 1233.50) scale(1.0763 1)" font-size="26.67" stroke="#000" stroke-width="0.5" fill="#000">ENABLED</text></g>
</svg>
</div>
</body>
</html>
